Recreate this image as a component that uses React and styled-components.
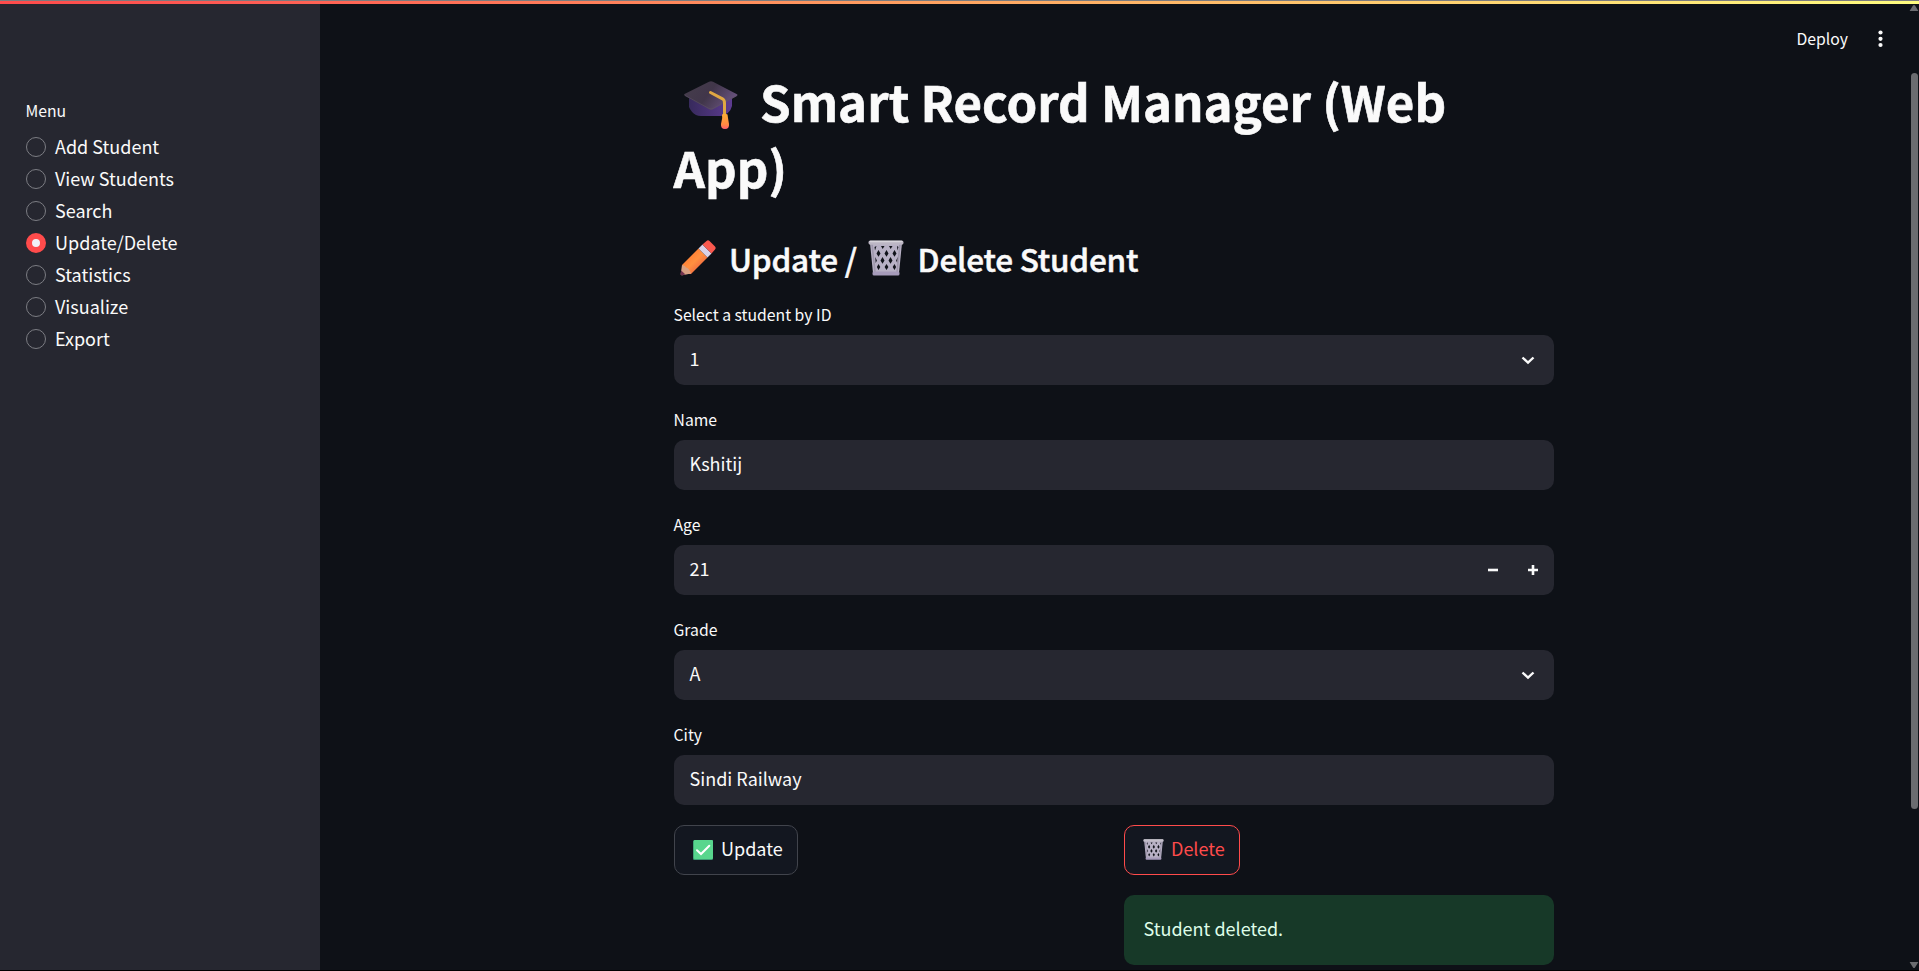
import React from "react";
import styled, { createGlobalStyle } from "styled-components";

const Global = createGlobalStyle`
  * { box-sizing: border-box; }
  html, body { margin: 0; height: 100%; overflow: hidden; background: #0e1117; }
  body, button, input { font-family: "Noto Sans CJK SC", "Noto Sans", sans-serif; color: #fafafa; }
  h1, h2, p { margin: 0; }
  svg { display: block; flex: none; }
`;

const Shell = styled.div`
  display: flex;
  width: 1919px;
  height: 971px;
  overflow: hidden;
  border-bottom: 1px solid #000;
  position: relative;
`;

const Rainbow = styled.div`
  position: absolute;
  top: 0;
  left: 0;
  right: 0;
  height: 4px;
  border-top: 1px solid #7c7c7e;
  background: linear-gradient(90deg, #ff4b4b 0%, #ff5a53 12%, #ffa562 50%, #fffd80 100%);
`;

const Sidebar = styled.aside`
  width: 320px;
  flex: none;
  background: #262730;
  padding: 98px 26px 0 25.5px;
`;

const MenuTitle = styled.div`
  font-size: 15.75px;
  line-height: 26px;
  margin-bottom: 7px;
`;

const MenuItem = styled.label`
  display: flex;
  align-items: center;
  gap: 9px;
  height: 32px;
  padding-left: 0.5px;
  font-size: 18px;
  line-height: 30px;
`;

const Text = styled.span`
  padding-bottom: ${(p) => p.$lift || 2}px;
`;

const Radio = styled.span`
  width: 20px;
  height: 20px;
  border-radius: 50%;
  border: ${(p) => (p.$on ? "6px solid #ff4b4b" : "1px solid #7c7d83")};
  background: ${(p) => (p.$on ? "#f0f2f6" : "transparent")};
`;

const Main = styled.main`
  flex: 1;
  padding: 68px 0 0 354px;
`;

const Block = styled.div`
  width: 880px;
`;

const Title = styled.h1`
  font-size: 49.2px;
  line-height: 66px;
  font-weight: 700;
  display: flex;
  flex-wrap: wrap;
  align-items: center;
  margin-left: -0.5px;
  -webkit-text-stroke: 0.6px #fafafa;
`;

const CapSlot = styled.span`
  display: inline-flex;
  width: 86.5px;
  padding: 8px 0 0 9.5px;
`;

const TitleLine = styled.span`
  white-space: nowrap;
`;

const Subtitle = styled.h2`
  display: flex;
  align-items: center;
  margin: 36px 0 20px;
  height: 44px;
  font-size: 31.5px;
  line-height: 42px;
  font-weight: 500;
  letter-spacing: -0.22px;
  -webkit-text-stroke: 0.5px #fafafa;
  white-space: pre;
`;

const PencilSlot = styled.span`
  width: 55px;
  padding-left: 6px;
`;

const BinSlot = styled.span`
  width: 54px;
  padding-left: 4px;
`;

const Field = styled.div`
  margin-bottom: 20px;
`;

const Label = styled.label`
  display: block;
  font-size: 15.75px;
  line-height: 26px;
  height: 35px;
  margin-left: -0.5px;
  padding-top: 2px;
`;

const Control = styled.div`
  display: flex;
  align-items: center;
  justify-content: space-between;
  height: 50px;
  border-radius: 10px;
  background: #262730;
  padding: 0 16px 0 15.5px;
  font-size: 18px;
`;

const Steps = styled.span`
  display: flex;
  gap: 30px;
`;

const Actions = styled.div`
  display: grid;
  grid-template-columns: 430px 430px;
  gap: 20px;
`;

const Column = styled.div`
  display: flex;
  flex-direction: column;
  align-items: flex-start;
  gap: 20px;
`;

const Button = styled.button`
  display: flex;
  align-items: center;
  gap: ${(p) => (p.$danger ? 7 : 8)}px;
  height: 50px;
  width: ${(p) => p.$w}px;
  padding: 0 0 1px 18px;
  border-radius: 10px;
  border: 1px solid ${(p) => (p.$danger ? "#ff4b4b" : "#41444c")};
  background: #131720;
  color: ${(p) => (p.$danger ? "#ff4b4b" : "#fafafa")};
  font-size: 18px;
`;

const Alert = styled.div`
  width: 100%;
  height: 70px;
  padding: 0 19.5px;
  border-radius: 10px;
  background: #173928;
  color: #dffde9;
  font-size: 18px;
  line-height: 67px;
`;

const Toolbar = styled.div`
  position: absolute;
  top: 24px;
  right: 36px;
  display: flex;
  align-items: center;
  gap: 30px;
  font-size: 15.75px;
  line-height: 30px;
`;

const Scrollbar = styled.div`
  position: absolute;
  top: 4px;
  right: 0;
  bottom: 1px;
  width: 10px;
  display: flex;
  flex-direction: column;
  align-items: center;
`;

const Thumb = styled.div`
  width: 7px;
  height: 736px;
  margin: 61px 0 auto;
  border-radius: 4px;
  background: #6b6c70;
`;

const Cap = () => (
  <svg width="56" height="50" viewBox="0 0 56 50">
    <defs>
      <linearGradient id="capTop" x1="0" y1="0" x2="1" y2="0.4">
        <stop offset="0" stopColor="#463e4c" />
        <stop offset="0.55" stopColor="#41364a" />
        <stop offset="1" stopColor="#65507a" />
      </linearGradient>
      <linearGradient id="capBase" x1="0" x2="1">
        <stop offset="0" stopColor="#372a5c" />
        <stop offset="1" stopColor="#5d3b91" />
      </linearGradient>
      <linearGradient id="tassel" x1="0" y1="0" x2="0" y2="1">
        <stop offset="0" stopColor="#ffad35" />
        <stop offset="0.7" stopColor="#ff8a42" />
        <stop offset="1" stopColor="#ff5f70" />
      </linearGradient>
    </defs>
    <path d="M6 18V27Q8 32 13 35Q15 36 18 36H38Q47 34 49 26V17L27 28Z" fill="url(#capBase)" />
    <path d="M1.5 15.500Q0 14.700 2 13.800L26 1.700Q28 .8 30 1.700L53.500 14Q55.500 15 53.500 16.200L30 29.200Q28 30.300 26 29.200Z" fill="url(#capTop)" />
    <path d="M2 15.500L26 28.500Q28 29.500 30 28.500L54 15.300" fill="none" stroke="#5d5066" strokeWidth=".6" />
    <path d="M27.500 12.500L39.500 18.800Q41.500 20 41.500 23V36" fill="none" stroke="#e0a843" strokeWidth="3" strokeLinecap="round" />
    <path d="M39 34.500Q42 33 44.500 34.500L45 38L46 44Q46.500 49 42 49Q37.500 49 38 44L39.200 38Z" fill="url(#tassel)" />
  </svg>
);

const Pencil = () => (
  <svg width="36" height="36" viewBox="0 0 36 36">
    <defs>
      <linearGradient id="wood" x1="0" y1="0" x2="1" y2="1">
        <stop offset="0.2" stopColor="#ff7a30" />
        <stop offset="0.5" stopColor="#ff9040" />
        <stop offset="0.8" stopColor="#ed6340" />
      </linearGradient>
    </defs>
    <path d="M2 25L18.500 8.500L27.500 17.500L11 34L6 34Z" fill="url(#wood)" />
    <path d="M2 25Q5 25 6 27.500Q9 28 11 33.500L2.500 35.200Q.5 35.600.7 34Z" fill="#d8a183" />
    <path d="M1.200 30.500L5.500 34.600L2 35.300Q.3 35.500.6 34Z" fill="#72314d" />
    <path d="M18.500 8.500L22.500 4.500L31.500 13.500L27.500 17.500Z" fill="#d9d2e8" />
    <path d="M22.500 4.500L26.500.9Q28-.3 29.500 1L35 6.500Q36.300 8 35 9.500L31.500 13.500Z" fill="#f9594f" />
  </svg>
);

const Bin = ({ size = 36 }) => (
  <svg width={size} height={size} viewBox="0 0 36 36">
    <path d="M2 3H34L31 33H5Z" fill="#b8b1c5" />
    <g fill="#11131a">
      <path d="M6.500 7l2-1-1.500 4.500zM13 6h3.500l-1.800 3zM21 6h3.500l-1.800 3zM29 6l1.500 1-1 3.500zM10.500 10l2 3.500-2 3.200-2-3.200zM18.500 10l2 3.500-2 3.200-2-3.200zM26.500 10l2 3.500-2 3.200-2-3.200zM14.500 17l2 3.500-2 3.200-2-3.200zM22.500 17l2 3.500-2 3.200-2-3.200zM7.200 17l1.700 3.500-1.200 2.600zM29.800 17l-1.700 3.500 1.200 2.600zM10.500 24l1.800 3-1.800 3-1.600-3zM18.500 24l1.900 3-1.900 3-1.900-3zM26.500 24l1.600 3-1.600 3-1.800-3z" />
    </g>
    <path d="M4 4l3 28M32 4l-3 28" stroke="#9f98ac" strokeWidth="1.600" />
    <rect x="0.500" y="0.500" width="35" height="4.200" rx="1.800" fill="#bcb6c4" />
    <rect x="1.500" y="0.700" width="33" height="1.600" rx=".8" fill="#d8d5dc" />
    <rect x="4.500" y="31.500" width="27" height="4" rx="1.500" fill="#a69bba" />
  </svg>
);

const Check = () => (
  <svg width="20" height="20" viewBox="0 0 20 20">
    <rect width="20" height="20" rx="1.500" fill="#3c9c73" />
    <rect x=".8" y="0" width="19.200" height="19" rx="1.200" fill="#58d68d" />
    <path d="M4 10.200L8 14L16.300 5.800" fill="none" stroke="#fff" strokeWidth="2" strokeLinecap="round" />
  </svg>
);

const Chevron = () => (
  <svg width="20" height="20" viewBox="0 0 20 20">
    <path d="M4.500 7.500L10 12.700L15.500 7.500" fill="none" stroke="#fafafa" strokeWidth="2.400" />
  </svg>
);

const StepIcon = ({ plus }) => (
  <svg width="10" height="10" viewBox="0 0 10 10">
    <path d={plus ? "M0 5H10M5 0V10" : "M0 5H10"} stroke="#fafafa" strokeWidth="2.600" />
  </svg>
);

const Dots = () => (
  <svg width="5" height="18" viewBox="0 0 5 18">
    {[2.5, 8.800, 15].map((y) => <circle key={y} cx="2.500" cy={y} r="2.100" fill="#fafafa" />)}
  </svg>
);

const Arrow = ({ down }) => (
  <svg width="10" height="8" viewBox="0 0 10 8">
    <path d={down ? "M.6 1H9.400L6 6.500Q5 7.500 4 6.500Z" : "M.6 7H9.400L6 1.500Q5 .5 4 1.500Z"} fill="#6b6c70" />
  </svg>
);

const MENU = ["Add Student", "View Students", "Search", "Update/Delete", "Statistics", "Visualize", "Export"];

const FormField = ({ label, value, children }) => (
  <Field>
    <Label>{label}</Label>
    <Control><Text $lift={4}>{value}</Text>{children}</Control>
  </Field>
);

export default function App() {
  return (
    <Shell>
      <Global />
      <Sidebar>
        <MenuTitle>Menu</MenuTitle>
        {MENU.map((m) => (
          <MenuItem key={m}><Radio $on={m === "Update/Delete"} /><Text>{m}</Text></MenuItem>
        ))}
      </Sidebar>
      <Main>
        <Block>
          <Title>
            <CapSlot><Cap /></CapSlot>
            <TitleLine>Smart Record Manager (Web</TitleLine>
            <TitleLine>App)</TitleLine>
          </Title>
          <Subtitle>
            <PencilSlot><Pencil /></PencilSlot>
            <span>Update / </span>
            <BinSlot><Bin /></BinSlot>
            <span>Delete Student</span>
          </Subtitle>
          <FormField label="Select a student by ID" value="1"><Chevron /></FormField>
          <FormField label="Name" value="Kshitij" />
          <FormField label="Age" value="21"><Steps><StepIcon /><StepIcon plus /></Steps></FormField>
          <FormField label="Grade" value="A"><Chevron /></FormField>
          <FormField label="City" value="Sindi Railway" />
          <Actions>
            <Column>
              <Button $w={124}><Check /><Text $lift={3}>Update</Text></Button>
            </Column>
            <Column>
              <Button $w={116} $danger><Bin size={21} /><Text $lift={3}>Delete</Text></Button>
              <Alert>Student deleted.</Alert>
            </Column>
          </Actions>
        </Block>
      </Main>
      <Toolbar><span>Deploy</span><Dots /></Toolbar>
      <Scrollbar><Arrow /><Thumb /><Arrow down /></Scrollbar>
      <Rainbow />
    </Shell>
  );
}
